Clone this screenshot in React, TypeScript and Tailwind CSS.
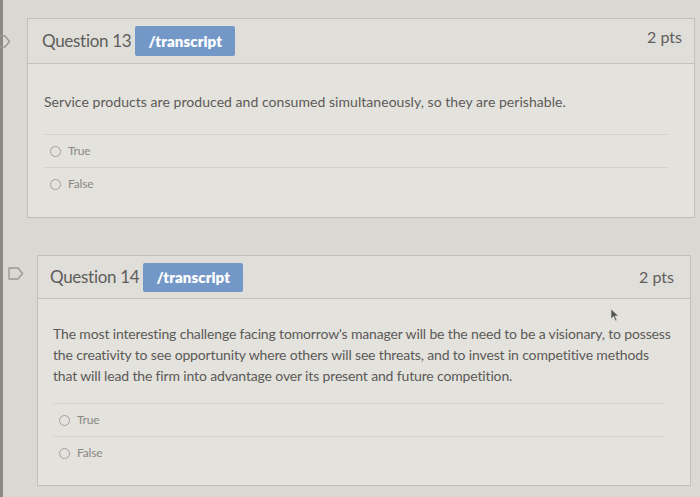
import React from "react";

const font = { fontFamily: "Lato, 'Open Sans', sans-serif" };

function Bookmark({ className }: { className?: string }) {
  return (
    <svg className={className} width="16" height="13" viewBox="0 0 16 13">
      <path d="M1 1 H10 L14.5 6.5 L10 12 H1 Z" fill="none" stroke="#9a9895" strokeWidth="1.4" strokeLinejoin="round" />
    </svg>
  );
}

function Radio() {
  return (
    <span className="inline-block w-[11px] h-[11px] rounded-full border border-[#a3a19d] bg-[#e4e2de]" />
  );
}

function Option({ label, pl }: { label: string; pl: string }) {
  return (
    <div className={`flex items-center gap-[7px] h-[32px] ${pl}`}>
      <Radio />
      <span className="text-[12px] text-[#8a8884] tracking-[-0.2px]">{label}</span>
    </div>
  );
}

function Badge({ h }: { h: string }) {
  return (
    <span className={`ml-[4px] ${h} px-[13px] flex items-center rounded-[2px] bg-[#7398c8] text-white text-[15px] font-extrabold tracking-[0.1px]`} style={{ fontFamily: "Lato, 'Open Sans', sans-serif" }}>
      /transcript
    </span>
  );
}

export default function App() {
  return (
    <div className="relative w-[700px] h-[497px] overflow-hidden bg-[#dbd8d3] flex" style={font}>
      <div className="w-[3px] h-full bg-[#8b8985] shrink-0" />
      <div className="flex-1 flex flex-col">
        {/* Question 13 */}
        <div className="flex items-start pt-[18px]">
          <div className="w-[24px] pt-[17px] -ml-[8px] shrink-0">
            <Bookmark />
          </div>
          <div className="ml-[8px] w-[668px] border border-[#c2bfba] bg-[#e4e2dd]">
            <div className="h-[45px] flex items-center pl-[14px] pr-[12px] bg-[#e0ded9] border-b border-[#c4c1bc]">
              <span className="text-[17px] text-[#5e5d5b] tracking-[-0.3px]">Question 13</span>
              <Badge h="h-[30px]" />
              <span className="ml-auto self-start mt-[6px] text-[16px] text-[#5e5d5b]">2 pts</span>
            </div>
            <div className="px-[16px] pt-[27px] pb-[17px]">
              <p className="text-[14px] text-[#5b5a58] tracking-[0.05px] leading-[21px]">
                Service products are produced and consumed simultaneously, so they are perishable.
              </p>
              <div className="mt-[22px] mr-[10px] border-t border-[#d3d0cb]">
                <Option label="True" pl="pl-[6px]" />
                <div className="border-t border-[#d3d0cb]" />
                <Option label="False" pl="pl-[6px]" />
              </div>
            </div>
          </div>
        </div>

        {/* Question 14 */}
        <div className="flex items-start mt-[37px]">
          <div className="w-[34px] pt-[12px] pl-[5px] shrink-0">
            <Bookmark />
          </div>
          <div className="w-[654px] border border-[#c2bfba] bg-[#e4e2dd]">
            <div className="h-[43px] flex items-center pl-[12px] pr-[16px] bg-[#e0ded9] border-b border-[#c4c1bc]">
              <span className="text-[17px] text-[#5e5d5b] tracking-[-0.3px]">Question 14</span>
              <Badge h="h-[29px]" />
              <span className="ml-auto text-[16px] text-[#5e5d5b]">2 pts</span>
            </div>
            <div className="px-[15px] pt-[24px] pb-[16px]">
              <p className="text-[14px] text-[#5b5a58] tracking-[-0.15px] leading-[21px]">
                The most interesting challenge facing tomorrow's manager will be the need to be a visionary, to possess the creativity to see opportunity where others will see threats, and to invest in competitive methods that will lead the firm into advantage over its present and future competition.
              </p>
              <div className="mt-[17px] mr-[10px] border-t border-[#d3d0cb]">
                <Option label="True" pl="pl-[6px]" />
                <div className="border-t border-[#d3d0cb]" />
                <Option label="False" pl="pl-[6px]" />
              </div>
            </div>
          </div>
        </div>
      </div>
      <svg className="absolute left-[610px] top-[308px]" width="10" height="14" viewBox="0 0 10 14">
        <path d="M1 1 L1 11 L3.5 8.5 L5.5 13 L7 12.3 L5 8 L8.5 8 Z" fill="#555" stroke="#e3e1dc" strokeWidth="0.6" />
      </svg>
    </div>
  );
}
